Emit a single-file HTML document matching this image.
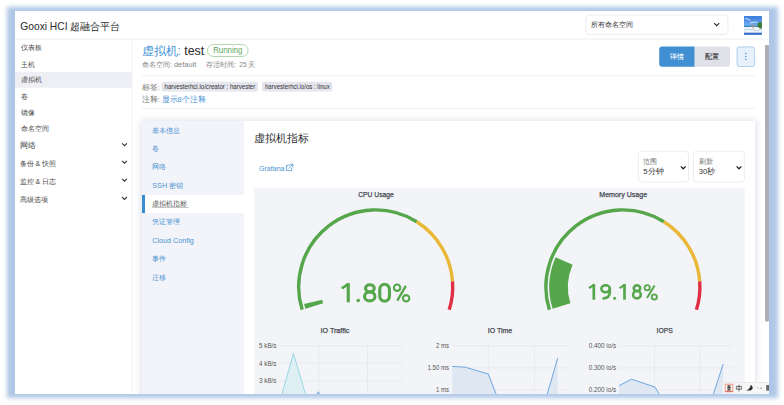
<!DOCTYPE html>
<html><head><meta charset="utf-8">
<style>
html,body{margin:0;padding:0;width:784px;height:405px;overflow:hidden;background:#fff}
svg{display:block;font-family:"Liberation Sans",sans-serif}
</style></head><body>
<svg width="784" height="405" viewBox="0 0 784 405">
<defs>
<filter id="bl" x="-10%" y="-10%" width="120%" height="120%"><feGaussianBlur stdDeviation="2"/></filter>
<filter id="cs" x="-10%" y="-10%" width="120%" height="120%"><feGaussianBlur stdDeviation="3.5"/></filter>
<clipPath id="wc"><rect x="15" y="11" width="754" height="383"/></clipPath>
<linearGradient id="sky2" x1="0" y1="0" x2="0" y2="1"><stop offset="0" stop-color="#3478dc"/><stop offset="1" stop-color="#79b3ef"/></linearGradient>
<linearGradient id="sky" x1="0" y1="0" x2="0" y2="1">
<stop offset="0" stop-color="#2f78d8"/><stop offset="0.45" stop-color="#7fb8ea"/><stop offset="0.55" stop-color="#e9f3f8"/><stop offset="0.8" stop-color="#ffffff"/><stop offset="1" stop-color="#3f72c0"/>
</linearGradient>
</defs>

<rect x="7" y="6.8" width="771" height="391.2" rx="0" fill="#afc7e6" filter="url(#bl)"/>
<rect x="15" y="11" width="754" height="383" rx="0" fill="#ffffff" />
<g clip-path="url(#wc)">
<rect x="15" y="38.6" width="754" height="1" rx="0" fill="#eceef3" />
<text x="20.3" y="29.6" font-size="11" fill="#2a2a2a" text-anchor="start" font-weight="normal" textLength="47.2" lengthAdjust="spacingAndGlyphs" >Gooxi HCI</text>
<text x="70" y="30" font-size="10.45" fill="#2a2a2a" text-anchor="start" font-weight="normal" >超融合平台</text>
<rect x="586" y="15" width="142" height="19.5" rx="3" fill="none" stroke="#e7e9ee" stroke-width="0.8" />
<text x="590.8" y="27.3" font-size="7.1" fill="#333" text-anchor="start" font-weight="normal" >所有命名空间</text>
<path d="M714.17 23.04 L716.70 25.57 L719.23 23.04" fill="none" stroke="#2a2a2a" stroke-width="1.15"/>
<g>
<rect x="744.1" y="16.2" width="17.7" height="18.5" fill="#4a8ee6"/>
<rect x="744.1" y="16.2" width="17.7" height="10" fill="url(#sky2)"/>
<path d="M745.3 18.6 Q748 18.2 750.5 20.6 M750 23 Q754 21.6 757.5 22.2" stroke="#dce9f8" stroke-width="0.9" fill="none"/>
<rect x="744.1" y="25.6" width="17.7" height="1.4" fill="#2c8bc8"/>
<rect x="744.1" y="27" width="17.7" height="5.8" fill="#f2f6fb"/>
<path d="M745 29.6 Q749 28.6 753 30 Q757 31.2 761.8 29.8" stroke="#bdd2ea" stroke-width="1" fill="none"/>
<path d="M749.6 26.6 Q753 23 756.6 26.6 Z" fill="#9f9282"/>
<path d="M753.1 26.4 V29" stroke="#8a7a6a" stroke-width="0.6"/>
<path d="M757.4 23.4 Q760.5 21 761.8 22.4 V28.8 Q758.4 28.6 757.6 25.8 Z" fill="#3b7d34"/>
<rect x="744.1" y="32.8" width="17.7" height="1.9" fill="#3b6fc6"/>
</g>
<rect x="131.8" y="39" width="0.8" height="355" rx="0" fill="#eef0f5" />
<rect x="15" y="71.8" width="117" height="16" rx="0" fill="#eeeff4" />
<text x="21" y="50.4" font-size="6.6" fill="#4a4a4a" text-anchor="start" font-weight="normal" >仪表板</text>
<text x="21" y="66.8" font-size="6.6" fill="#4a4a4a" text-anchor="start" font-weight="normal" >主机</text>
<text x="21" y="82.2" font-size="6.6" fill="#4a4a4a" text-anchor="start" font-weight="normal" >虚拟机</text>
<text x="21" y="98.9" font-size="6.6" fill="#4a4a4a" text-anchor="start" font-weight="normal" >卷</text>
<text x="21" y="114.7" font-size="6.6" fill="#4a4a4a" text-anchor="start" font-weight="normal" >镜像</text>
<text x="21" y="131.3" font-size="6.6" fill="#4a4a4a" text-anchor="start" font-weight="normal" >命名空间</text>
<text x="19.8" y="148.3" font-size="7.6" fill="#444" text-anchor="start" font-weight="normal" >网络</text>
<path d="M122.08 143.29 L124.50 145.71 L126.92 143.29" fill="none" stroke="#3a3a3a" stroke-width="1.1"/>
<text x="19.8" y="165.8" font-size="7.4" fill="#444" text-anchor="start" font-weight="normal" >备份</text>
<text x="35.6" y="165.6" font-size="7" fill="#444" text-anchor="start" font-weight="normal" >&amp;</text>
<text x="42.3" y="165.8" font-size="7.4" fill="#444" text-anchor="start" font-weight="normal" >快照</text>
<path d="M122.08 160.79 L124.50 163.21 L126.92 160.79" fill="none" stroke="#3a3a3a" stroke-width="1.1"/>
<text x="19.8" y="183.8" font-size="7.4" fill="#444" text-anchor="start" font-weight="normal" >监控</text>
<text x="35.6" y="183.6" font-size="7" fill="#444" text-anchor="start" font-weight="normal" >&amp;</text>
<text x="42.3" y="183.8" font-size="7.4" fill="#444" text-anchor="start" font-weight="normal" >日志</text>
<path d="M122.08 178.79 L124.50 181.21 L126.92 178.79" fill="none" stroke="#3a3a3a" stroke-width="1.1"/>
<text x="19.8" y="202.0" font-size="7.3" fill="#444" text-anchor="start" font-weight="normal" >高级选项</text>
<path d="M122.08 196.99 L124.50 199.41 L126.92 196.99" fill="none" stroke="#3a3a3a" stroke-width="1.1"/>
<text x="141.6" y="55" font-size="12" fill="#4796d8" text-anchor="start" font-weight="normal" >虚拟机:</text>
<text x="184.2" y="54.6" font-size="12.2" fill="#2a2a2a" text-anchor="start" font-weight="normal" textLength="20" lengthAdjust="spacingAndGlyphs" >test</text>
<rect x="207.4" y="44.5" width="40.7" height="12" rx="6" fill="none" stroke="#a9d4a9" stroke-width="0.9" />
<text x="227.8" y="53.3" font-size="8.6" fill="#5aa65a" text-anchor="middle" font-weight="normal" textLength="29.3" lengthAdjust="spacingAndGlyphs" >Running</text>
<text x="142" y="66.8" font-size="7.3" fill="#858585" text-anchor="start" font-weight="normal" >命名空间: </text>
<text x="174" y="66.8" font-size="7.3" fill="#858585" text-anchor="start" font-weight="normal" textLength="22.2" lengthAdjust="spacingAndGlyphs" >default</text>
<text x="206.3" y="66.8" font-size="7.3" fill="#858585" text-anchor="start" font-weight="normal" >存活时间: </text>
<text x="239.3" y="66.8" font-size="7.3" fill="#858585" text-anchor="start" font-weight="normal" textLength="7.2" lengthAdjust="spacingAndGlyphs" >25</text>
<text x="248" y="66.8" font-size="7.3" fill="#858585" text-anchor="start" font-weight="normal" >天</text>
<path d="M662.2 46.4 H694.7 V66.8 H662.2 A3 3 0 0 1 659.2 63.8 V49.4 A3 3 0 0 1 662.2 46.4 Z" fill="#3f8fd2"/>
<path d="M694.7 46.4 H727 A3 3 0 0 1 730 49.4 V63.8 A3 3 0 0 1 727 66.8 H694.7 Z" fill="#dfe0e8"/>
<text x="676.9" y="59.3" font-size="7.2" fill="#ffffff" text-anchor="middle" font-weight="normal" stroke="#fff" stroke-width="0.1">详情</text>
<text x="712.3" y="59.3" font-size="7.2" fill="#333333" text-anchor="middle" font-weight="normal" stroke="#333" stroke-width="0.12">配置</text>
<rect x="737" y="46.9" width="17.6" height="19.6" rx="2.5" fill="#e7f1fb" stroke="#a8cbec" stroke-width="0.9" />
<circle cx="745.8" cy="53.6" r="0.75" fill="#3f8fd2"/>
<circle cx="745.8" cy="56.6" r="0.75" fill="#3f8fd2"/>
<circle cx="745.8" cy="59.6" r="0.75" fill="#3f8fd2"/>
<rect x="142" y="75.3" width="612.6" height="1" rx="0" fill="#eef0f4" />
<rect x="142" y="107.9" width="612.6" height="1" rx="0" fill="#eef0f4" />
<text x="141.8" y="89.6" font-size="7.5" fill="#7a7a7a" text-anchor="start" font-weight="normal" >标签:</text>
<rect x="161.5" y="81.8" width="96.5" height="9.6" rx="2" fill="#e4e5ed" />
<text x="164.5" y="89.3" font-size="6.8" fill="#333" text-anchor="start" font-weight="normal" textLength="90.8" lengthAdjust="spacingAndGlyphs" >harvesterhci.io/creator : harvester</text>
<rect x="262.1" y="81.8" width="70.2" height="9.6" rx="2" fill="#e4e5ed" />
<text x="265" y="89.3" font-size="6.8" fill="#333" text-anchor="start" font-weight="normal" textLength="64.7" lengthAdjust="spacingAndGlyphs" >harvesterhci.io/os : linux</text>
<text x="141.8" y="101.5" font-size="7.5" fill="#7a7a7a" text-anchor="start" font-weight="normal" >注释:</text>
<text x="161.5" y="101.5" font-size="7.5" fill="#4b95d6" text-anchor="start" font-weight="normal" >显示8个注释</text>
<rect x="141" y="120.5" width="615" height="300" rx="0" fill="#dcdfe8" filter="url(#cs)"/>
<rect x="142" y="121" width="613" height="300" rx="0" fill="#ffffff" />
<rect x="142" y="121" width="102" height="300" rx="0" fill="#f3f4f9" />
<rect x="142" y="194.9" width="102" height="18.2" rx="0" fill="#ffffff" />
<rect x="142" y="194.9" width="3" height="18.2" rx="0" fill="#3c8ed3" />
<text x="152.3" y="132.79999999999998" font-size="7.2" fill="#4b93d3" text-anchor="start" font-weight="normal" >基本信息</text>
<text x="152.3" y="151.0" font-size="7.2" fill="#4b93d3" text-anchor="start" font-weight="normal" >卷</text>
<text x="152.3" y="169.1" font-size="7.2" fill="#4b93d3" text-anchor="start" font-weight="normal" >网络</text>
<text x="152.3" y="187.9" font-size="7.2" fill="#4b93d3" text-anchor="start" font-weight="normal" >SSH 密钥</text>
<text x="152.3" y="224.29999999999998" font-size="7.2" fill="#4b93d3" text-anchor="start" font-weight="normal" >凭证管理</text>
<text x="152.3" y="242.9" font-size="7.2" fill="#4b93d3" text-anchor="start" font-weight="normal" >Cloud Config</text>
<text x="152.3" y="261.3" font-size="7.2" fill="#4b93d3" text-anchor="start" font-weight="normal" >事件</text>
<text x="152.3" y="279.6" font-size="7.2" fill="#4b93d3" text-anchor="start" font-weight="normal" >迁移</text>
<text x="152.1" y="205.9" font-size="7.3" fill="#555" text-anchor="start" font-weight="normal" >虚拟机指标</text>
<rect x="152.3" y="206.9" width="36.3" height="0.6" rx="0" fill="#8a8a8a" />
<text x="253.5" y="142" font-size="10.6" fill="#2f2f2f" text-anchor="start" font-weight="normal" >虚拟机指标</text>
<text x="259" y="171" font-size="8" fill="#4b93d3" text-anchor="start" font-weight="normal" textLength="25.5" lengthAdjust="spacingAndGlyphs" >Grafana</text>
<g fill="none" stroke="#4b93d3" stroke-width="0.8"><path d="M289.3 165.4 H286.5 V170.6 H291.7 V167.8"/><path d="M289.6 164.3 H292.8 V167.5 M292.8 164.3 L288.6 168.5"/></g>
<rect x="638.3" y="151.3" width="50.2" height="30.7" rx="3" fill="#fff" stroke="#e6e8ee" stroke-width="0.8" />
<rect x="693.5" y="151.3" width="50.9" height="30.7" rx="3" fill="#fff" stroke="#e6e8ee" stroke-width="0.8" />
<text x="643.3" y="163.5" font-size="7" fill="#767676" text-anchor="start" font-weight="normal" >范围</text>
<text x="643.3" y="174.2" font-size="7.6" fill="#333" text-anchor="start" font-weight="normal" >5分钟</text>
<path d="M680.78 166.39 L683.20 168.81 L685.62 166.39" fill="none" stroke="#222" stroke-width="1.3"/>
<text x="698.8" y="163.5" font-size="7" fill="#767676" text-anchor="start" font-weight="normal" >刷新</text>
<text x="698.8" y="174.2" font-size="7.6" fill="#333" text-anchor="start" font-weight="normal" >30秒</text>
<path d="M736.58 166.39 L739.00 168.81 L741.42 166.39" fill="none" stroke="#222" stroke-width="1.3"/>
<rect x="254.2" y="187.7" width="490.6" height="220" rx="0" fill="#f3f4f8" />
<text x="376" y="197.2" font-size="7" fill="#464c54" text-anchor="middle" font-weight="normal" textLength="35.7" lengthAdjust="spacingAndGlyphs" stroke="#464c54" stroke-width="0.25">CPU Usage</text>
<text x="623.2" y="197.2" font-size="7" fill="#464c54" text-anchor="middle" font-weight="normal" textLength="47.9" lengthAdjust="spacingAndGlyphs" stroke="#464c54" stroke-width="0.25">Memory Usage</text>
<path d="M302.18 309.80 A77 77 0 0 1 416.72 221.74" fill="none" stroke="#56a64b" stroke-width="3.4"/>
<path d="M416.72 221.74 A77 77 0 0 1 452.50 281.31" fill="none" stroke="#eab839" stroke-width="3.4"/>
<path d="M452.50 281.31 A77 77 0 0 1 449.22 309.80" fill="none" stroke="#e02f44" stroke-width="3.4"/>
<path d="M314.31 306.02 A64.3 64.3 0 0 1 313.16 301.84" fill="none" stroke="#56a64b" stroke-width="18.6"/>
<g fill="none" stroke="#56a64b">
<path d="M348.25 283.2 V302.3" stroke-width="3.2"/>
<path d="M341.8 288.3 L348.7 283.9" stroke-width="2.7"/>
<circle cx="358.2" cy="300.5" r="1.8" fill="#56a64b" stroke="none"/>
<ellipse cx="369.9" cy="288.3" rx="4.35" ry="3.6" stroke-width="3.1"/>
<ellipse cx="369.75" cy="296.4" rx="5.2" ry="4.45" stroke-width="3.1"/>
<path d="M379.75 289.5 A4.85 5.2 0 0 1 389.45 289.5 V296.1 A4.85 5.2 0 0 1 379.75 296.1 Z" stroke-width="3.1"/>
<circle cx="397.1" cy="287.7" r="3.2" stroke-width="2.1"/>
<circle cx="406.1" cy="298.3" r="3.2" stroke-width="2.1"/>
<path d="M397.3 300.6 L405.8 285.9" stroke-width="2.3"/>
</g>
<path d="M549.38 309.80 A77 77 0 0 1 663.92 221.74" fill="none" stroke="#56a64b" stroke-width="3.4"/>
<path d="M663.92 221.74 A77 77 0 0 1 699.70 281.31" fill="none" stroke="#eab839" stroke-width="3.4"/>
<path d="M699.70 281.31 A77 77 0 0 1 696.42 309.80" fill="none" stroke="#e02f44" stroke-width="3.4"/>
<path d="M561.51 306.02 A64.3 64.3 0 0 1 564.10 260.89" fill="none" stroke="#56a64b" stroke-width="18.6"/>
<g fill="none" stroke="#56a64b">
<path d="M593.8 284 V299.7" stroke-width="2.7"/>
<path d="M588.9 288.2 L594.3 284.6" stroke-width="2.2"/>
<ellipse cx="605.6" cy="288.75" rx="4.2" ry="3.45" stroke-width="2.6"/>
<path d="M609.8 288.5 V292 C609.8 296.6 606.8 298.5 602.5 298.5" stroke-width="2.6"/>
<circle cx="614.6" cy="298.3" r="1.5" fill="#56a64b" stroke="none"/>
<path d="M624.5 284 V299.7" stroke-width="2.7"/>
<path d="M619.6 288.2 L625 284.6" stroke-width="2.2"/>
<ellipse cx="637" cy="288.15" rx="3.2" ry="2.85" stroke-width="2.6"/>
<ellipse cx="636.95" cy="294.7" rx="3.85" ry="3.7" stroke-width="2.6"/>
<circle cx="647.2" cy="287.7" r="2.6" stroke-width="1.8"/>
<circle cx="654.3" cy="296.9" r="2.6" stroke-width="1.8"/>
<path d="M647 298 L654.6 285.6" stroke-width="2"/>
</g>
<text x="334.9" y="333" font-size="7" fill="#464c54" text-anchor="middle" font-weight="normal" textLength="28.8" lengthAdjust="spacingAndGlyphs" stroke="#464c54" stroke-width="0.25">IO Traffic</text>
<text x="500" y="333" font-size="7" fill="#464c54" text-anchor="middle" font-weight="normal" textLength="24.5" lengthAdjust="spacingAndGlyphs" stroke="#464c54" stroke-width="0.25">IO Time</text>
<text x="664.7" y="333" font-size="7" fill="#464c54" text-anchor="middle" font-weight="normal" textLength="16.2" lengthAdjust="spacingAndGlyphs" stroke="#464c54" stroke-width="0.25">IOPS</text>
<rect x="279.3" y="345.40000000000003" width="123.69999999999999" height="0.8" rx="0" fill="#e5e6eb" />
<rect x="279.3" y="362.70000000000005" width="123.69999999999999" height="0.8" rx="0" fill="#e5e6eb" />
<rect x="279.3" y="380.5" width="123.69999999999999" height="0.8" rx="0" fill="#e5e6eb" />
<rect x="318.40000000000003" y="345.8" width="0.8" height="120" rx="0" fill="#e5e6eb" />
<rect x="367.20000000000005" y="345.8" width="0.8" height="120" rx="0" fill="#e5e6eb" />
<rect x="452.3" y="345.40000000000003" width="115.69999999999999" height="0.8" rx="0" fill="#e5e6eb" />
<rect x="452.3" y="367.5" width="115.69999999999999" height="0.8" rx="0" fill="#e5e6eb" />
<rect x="452.3" y="389.6" width="115.69999999999999" height="0.8" rx="0" fill="#e5e6eb" />
<rect x="487.90000000000003" y="345.8" width="0.8" height="120" rx="0" fill="#e5e6eb" />
<rect x="533.9" y="345.8" width="0.8" height="120" rx="0" fill="#e5e6eb" />
<rect x="619" y="345.40000000000003" width="114" height="0.8" rx="0" fill="#e5e6eb" />
<rect x="619" y="367.5" width="114" height="0.8" rx="0" fill="#e5e6eb" />
<rect x="619" y="389.6" width="114" height="0.8" rx="0" fill="#e5e6eb" />
<rect x="654.0" y="345.8" width="0.8" height="120" rx="0" fill="#e5e6eb" />
<rect x="699.3000000000001" y="345.8" width="0.8" height="120" rx="0" fill="#e5e6eb" />
<text x="276.5" y="348.2" font-size="6.8" fill="#555" text-anchor="end" font-weight="normal" textLength="17.4" lengthAdjust="spacingAndGlyphs" >5 kB/s</text>
<text x="276.5" y="365.5" font-size="6.8" fill="#555" text-anchor="end" font-weight="normal" textLength="17.4" lengthAdjust="spacingAndGlyphs" >4 kB/s</text>
<text x="276.5" y="383.29999999999995" font-size="6.8" fill="#555" text-anchor="end" font-weight="normal" textLength="17.4" lengthAdjust="spacingAndGlyphs" >3 kB/s</text>
<text x="449" y="348.2" font-size="6.8" fill="#555" text-anchor="end" font-weight="normal" textLength="13" lengthAdjust="spacingAndGlyphs" >2 ms</text>
<text x="449" y="370.29999999999995" font-size="6.8" fill="#555" text-anchor="end" font-weight="normal" textLength="21.5" lengthAdjust="spacingAndGlyphs" >1.50 ms</text>
<text x="449" y="392.4" font-size="6.8" fill="#555" text-anchor="end" font-weight="normal" textLength="13" lengthAdjust="spacingAndGlyphs" >1 ms</text>
<text x="616.2" y="348.2" font-size="6.8" fill="#555" text-anchor="end" font-weight="normal" textLength="27.5" lengthAdjust="spacingAndGlyphs" >0.400 io/s</text>
<text x="616.2" y="370.29999999999995" font-size="6.8" fill="#555" text-anchor="end" font-weight="normal" textLength="27.5" lengthAdjust="spacingAndGlyphs" >0.300 io/s</text>
<text x="616.2" y="392.4" font-size="6.8" fill="#555" text-anchor="end" font-weight="normal" textLength="27.5" lengthAdjust="spacingAndGlyphs" >0.200 io/s</text>
<path d="M281.5 396 L293.4 353.4 L306 396 Z" fill="#dff0f4" stroke="#8fd3e4" stroke-width="0.9"/>
<path d="M315.5 396 L318.3 391.8 L321 396" fill="#dde7f3" stroke="#5f9ddb" stroke-width="0.9"/>
<path d="M452.3 396 V366.4 L465.3 367.2 L488.3 374 L496.3 396 Z" fill="#dfe7f2"/>
<path d="M452.3 366.4 L465.3 367.2 L488.3 374 L496.8 396" fill="none" stroke="#609edb" stroke-width="0.9"/>
<path d="M546.7 396 L557.7 358.1 V396 Z" fill="#dfe7f2"/>
<path d="M546.7 396 L557.7 358.1" fill="none" stroke="#609edb" stroke-width="0.9"/>
<path d="M619 396 V385.7 L631.6 379.2 L654.8 387 L660.5 396 Z" fill="#dfe7f2"/>
<path d="M619 385.7 L631.6 379.2 L654.8 387 L660.5 396" fill="none" stroke="#609edb" stroke-width="0.9"/>
<path d="M712.8 396 L723.2 364 V396 Z" fill="#dfe7f2"/>
<path d="M712.8 396 L723.2 364" fill="none" stroke="#609edb" stroke-width="0.9"/>
<rect x="765" y="45" width="4" height="276.5" rx="1" fill="#adadb9" />
<rect x="721.9" y="382.2" width="48" height="11.2" rx="0" fill="#f6f6f6" />
<rect x="721.9" y="382.2" width="48" height="0.6" rx="0" fill="#e2e2e2" />
<rect x="721.9" y="382.2" width="0.6" height="11.2" rx="0" fill="#e6e6e6" />
<rect x="725.2" y="384.2" width="7.6" height="7.6" rx="0" fill="#fff4f0" stroke="#f09080" stroke-width="0.9" />
<rect x="725.2" y="391" width="7.6" height="0.9" rx="0" fill="#e86a5a" />
<path d="M727.3 386 H730.7 M727 387.8 H731 M728.9 385.3 V390 M727 390 H731" stroke="#222" stroke-width="0.9" fill="none"/>
<path d="M736.4 386.4 H741.6 V389.2 H736.4 Z M739 384.8 V391.5" stroke="#3a3a3a" stroke-width="0.7" fill="none"/>
<path d="M750.6 384.9 C754.2 386.4 753.6 391.8 746 390.3 C748.4 389.6 750.6 387.6 750.6 384.9 Z" fill="#2a2a2a"/>
<path d="M757.6 387.6 L758.4 388.2 M761 387.6 L761.4 389" stroke="#555" stroke-width="0.8"/>
<rect x="766.2" y="385" width="2.8" height="5.6" rx="0" fill="#666" />
</g>
</svg></body></html>
